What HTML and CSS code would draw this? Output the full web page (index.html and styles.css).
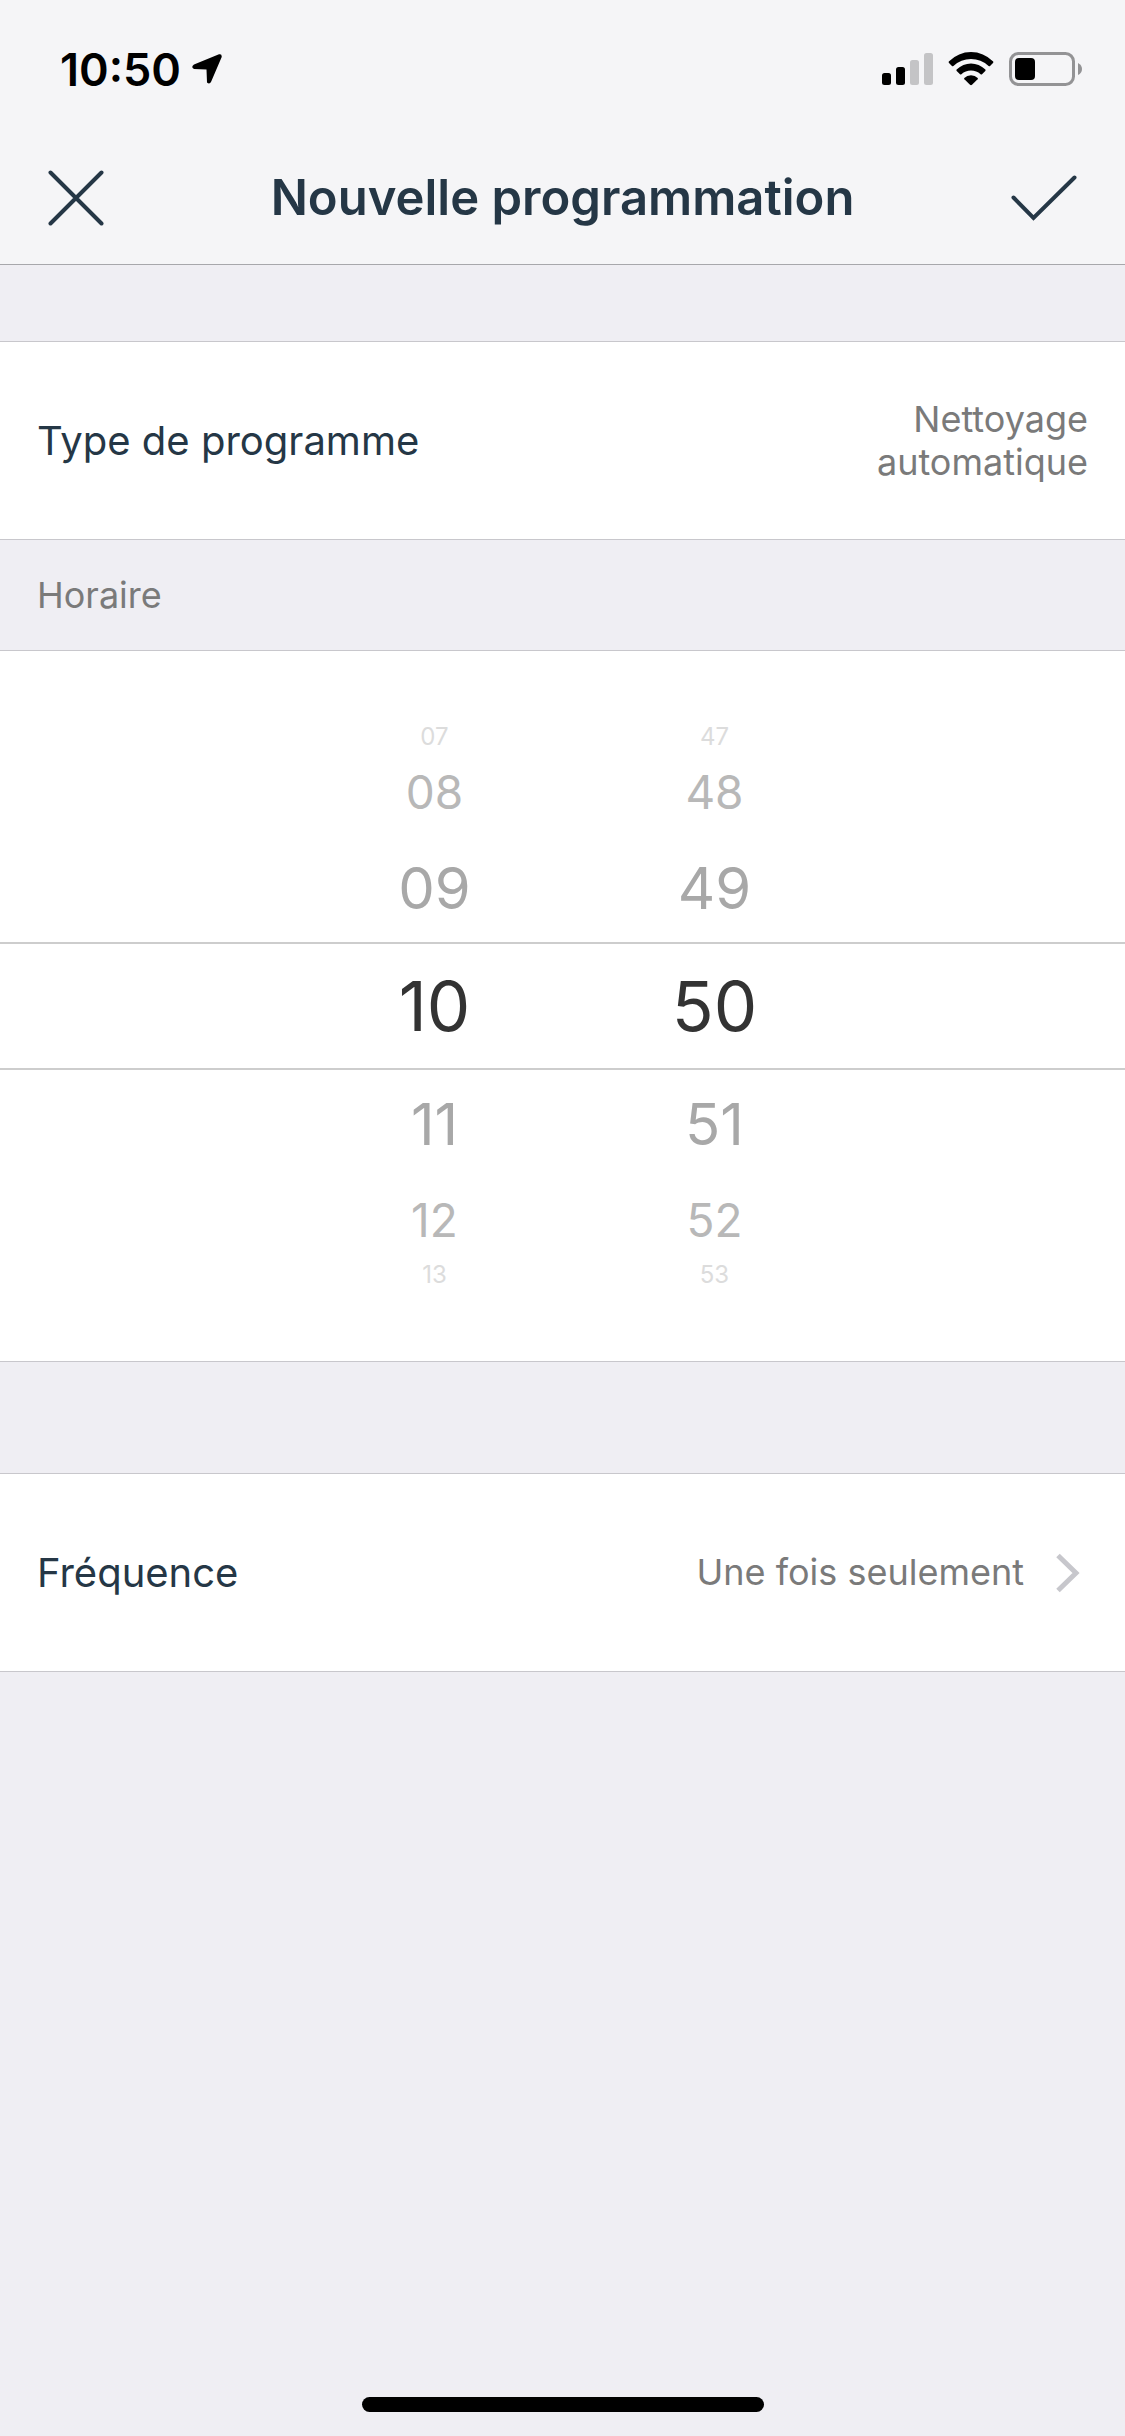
FILE: index.html
```html
<!DOCTYPE html>
<html lang="fr">
<head>
<meta charset="utf-8">
<meta name="viewport" content="width=device-width, initial-scale=1">
<title>Nouvelle programmation</title>
<link rel="stylesheet" href="styles.css">
</head>
<body>
<div class="screen">
  <header class="top">
    <div class="status">
      <div class="status-group status-time">
        <span>10:50</span>
        <svg width="30" height="30" viewBox="0 0 30 30" aria-hidden="true"><path d="M2 10.500 27 .300Q30-.500 29.700 3L19 28Q17.500 30.500 15 28.500L14.500 15.500 2 15Q-1.500 13 2 10.500Z"/></svg>
      </div>
      <div class="status-group status-icons">
        <svg width="51" height="34" viewBox="0 0 51 34" aria-hidden="true">
          <rect x="0" y="21" width="9" height="12" rx="2.500"/>
          <rect x="14" y="15" width="9" height="18" rx="2.500"/>
          <rect class="dim" x="28" y="8" width="9" height="25" rx="2.500"/>
          <rect class="dim" x="42" y="1" width="9" height="32" rx="2.500"/>
        </svg>
        <svg width="46" height="34" viewBox="0 0 46 34" aria-hidden="true">
          <path d="M.800 9.500Q10.500 0 23 0T45.200 9.500Q45.700 10.300 45 11L42 14Q41.400 14.500 40.600 13.900 33 7 23 7T5.400 13.900Q4.600 14.500 4 14L1 11Q.300 10.300.800 9.500Z"/>
          <path d="M8.600 17.600Q15 11.600 23 11.600T37.400 17.600Q37.900 18.300 37.300 19L34 22.200Q33.300 22.800 32.600 22.200 28.500 18.500 23 18.500T13.400 22.200Q12.700 22.800 12 22.200L8.700 19Q8.100 18.300 8.600 17.600Z"/>
          <path d="M16.300 26Q19 23.300 23 23.300T29.700 26Q30.200 26.700 29.600 27.300L24 32.800Q23 33.600 22 32.800L16.400 27.300Q15.800 26.700 16.300 26Z"/>
        </svg>
        <svg class="battery" width="74" height="34" viewBox="0 0 74 34" aria-hidden="true">
          <rect class="battery-case" x="1.500" y="1.500" width="63" height="31" rx="8"/>
          <rect x="6" y="6" width="20" height="22" rx="4"/>
          <path class="battery-tip" d="M69 11Q73 13 73 17T69 23Z"/>
        </svg>
      </div>
    </div>
    <div class="nav">
      <button class="icon-button" type="button" aria-label="Fermer">
        <svg width="56" height="56" viewBox="0 0 56 56"><path d="M2.500 2.500 53.500 53.500M53.500 2.500 2.500 53.500"/></svg>
      </button>
      <h1>Nouvelle programmation</h1>
      <button class="icon-button" type="button" aria-label="Valider">
        <svg width="66" height="46" viewBox="0 0 66 46"><path d="M2.500 22.500 22.500 43 63.500 2.500"/></svg>
      </button>
    </div>
  </header>

  <main>
    <section class="row row-first">
      <h2 class="label">Type de programme</h2>
      <p class="value value-narrow">Nettoyage automatique</p>
    </section>

    <h2 class="section-title" id="horaire">Horaire</h2>
    <section class="picker" aria-labelledby="horaire">
      <ul class="wheel" role="listbox" aria-label="Heures">
        <li class="far" role="option">07</li>
        <li class="mid" role="option">08</li>
        <li class="near" role="option">09</li>
        <li class="current" role="option" aria-selected="true">10</li>
        <li class="near" role="option">11</li>
        <li class="mid" role="option">12</li>
        <li class="far" role="option">13</li>
      </ul>
      <ul class="wheel" role="listbox" aria-label="Minutes">
        <li class="far" role="option">47</li>
        <li class="mid" role="option">48</li>
        <li class="near" role="option">49</li>
        <li class="current" role="option" aria-selected="true">50</li>
        <li class="near" role="option">51</li>
        <li class="mid" role="option">52</li>
        <li class="far" role="option">53</li>
      </ul>
      <div class="picker-band"></div>
    </section>

    <a class="row row-link" href="#frequence">
      <span class="label">Fréquence</span>
      <span class="value">Une fois seulement</span>
      <svg class="chevron" width="24" height="40" viewBox="0 0 24 40" aria-hidden="true"><path d="M2 2.500 20 20 2 37.500"/></svg>
    </a>
  </main>

  <div class="home-bar"></div>
</div>
</body>
</html>
```

FILE: styles.css
```css
* {
  box-sizing: border-box;
}

body,
h1,
h2,
p,
ul {
  margin: 0;
  padding: 0;
}

body {
  background: #efeef3;
  color: #253746;
  font-family: Inter, "Liberation Sans", sans-serif;
}

svg {
  display: block;
  flex: none;
}

.screen {
  display: flex;
  flex-direction: column;
  min-height: 100vh;
}

/* Header */

.top {
  background: #f5f5f7;
  border-bottom: 1px solid #a7a7ab;
}

.status {
  display: flex;
  justify-content: space-between;
  align-items: center;
  height: 132px;
  padding: 6px 42px 0 60px;
}

.status-group {
  display: flex;
  align-items: center;
  color: #000;
}

.status-time {
  gap: 11px;
  font-size: 45px;
  font-weight: 600;
}

.status-icons {
  gap: 15px;
}

.dim {
  fill: #c4c4c6;
}

.battery-case {
  fill: none;
  stroke: #939395;
  stroke-width: 3;
}

.battery-tip {
  fill: #939395;
}

.nav {
  display: flex;
  justify-content: space-between;
  align-items: center;
  height: 132px;
  padding: 0 48px;
}

.nav h1 {
  flex: 1;
  font-size: 49px;
  font-weight: 600;
  line-height: 60px;
  text-align: center;
}

.icon-button {
  width: 66px;
  padding: 0;
  border: 0;
  background: none;
  cursor: pointer;
}

.icon-button path {
  fill: none;
  stroke: #253746;
  stroke-width: 4;
  stroke-linecap: round;
}

/* Rows */

.row {
  display: flex;
  align-items: center;
  min-height: 199px;
  padding: 0 37px;
  border: solid #c8c7cc;
  border-width: 1px 0;
  background: #fff;
}

.row-first {
  margin-top: 76px;
}

.row-link {
  margin-top: 111px;
  padding-right: 45px;
  text-decoration: none;
}

.label {
  flex: 1;
  color: #253746;
  font-size: 40px;
  font-weight: 400;
}

.value {
  color: #7a7a7a;
  font-size: 36px;
  line-height: 43px;
  text-align: right;
}

.value-narrow {
  width: 300px;
}

.chevron {
  margin-left: 32px;
}

.chevron path {
  fill: none;
  stroke: #c7c7cc;
  stroke-width: 5;
}

.section-title {
  padding: 0 37px;
  color: #7a7a7a;
  font-size: 36px;
  font-weight: 400;
  line-height: 110px;
}

/* Time picker */

.picker {
  position: relative;
  display: flex;
  justify-content: center;
  padding: 73px 0 73px 24px;
  border: solid #c8c7cc;
  border-width: 1px 0;
  background: #fff;
}

.wheel {
  width: 280px;
  list-style: none;
  text-align: center;
}

.current {
  color: #333;
  font-size: 69px;
  line-height: 128px;
}

.near {
  color: #a8a8a8;
  font-size: 58px;
  line-height: 108px;
}

.mid {
  color: #b8b8b8;
  font-size: 46px;
  line-height: 84px;
}

.far {
  color: #dcdcdc;
  font-size: 24px;
  line-height: 26px;
}

.picker-band {
  position: absolute;
  top: 50%;
  right: 0;
  left: 0;
  height: 128px;
  margin-top: -64px;
  border: solid #cdcdcd;
  border-width: 2px 0;
  pointer-events: none;
}

/* Home indicator */

.home-bar {
  width: 402px;
  height: 15px;
  margin: auto auto 24px;
  border-radius: 8px;
  background: #000;
}
```
